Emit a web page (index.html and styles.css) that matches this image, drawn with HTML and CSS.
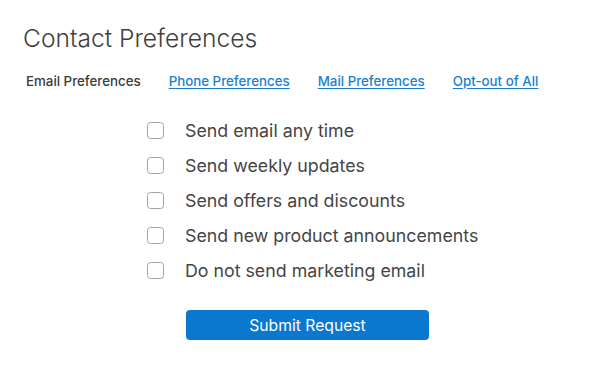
FILE: index.html
```html
<!DOCTYPE html>
<html lang="en">
<head>
<meta charset="utf-8">
<title>Contact Preferences</title>
<link rel="stylesheet" href="styles.css">
</head>
<body>
<div class="page">
  <h1 class="title">Contact Preferences</h1>
  <nav class="tabs">
    <span class="tab current">Email Preferences</span>
    <a class="tab link" href="#">Phone Preferences</a>
    <a class="tab link" href="#">Mail Preferences</a>
    <a class="tab link" href="#">Opt-out of All</a>
  </nav>
  <form class="form">
    <ul class="options">
      <li class="option"><span class="box"></span><span class="label">Send email any time</span></li>
      <li class="option"><span class="box"></span><span class="label">Send weekly updates</span></li>
      <li class="option"><span class="box"></span><span class="label">Send offers and discounts</span></li>
      <li class="option"><span class="box"></span><span class="label">Send new product announcements</span></li>
      <li class="option"><span class="box"></span><span class="label">Do not send marketing email</span></li>
    </ul>
    <button class="submit" type="button">Submit Request</button>
  </form>
</div>
</body>
</html>
```
FILE: styles.css
```css
html, body {
  margin: 0;
  padding: 0;
  background: #ffffff;
}
body {
  font-family: Inter, "Noto Sans", sans-serif;
  color: #444444;
}
.page {
  padding: 23px 0 0 23px;
}
.title {
  margin: 0;
  font-size: 24.6px;
  font-weight: 300;
  line-height: 30px;
  color: #3f3f3f;
}
.tabs {
  display: flex;
  gap: 28px;
  margin-top: 20px;
  padding-left: 3px;
  font-size: 13.3px;
  font-weight: 500;
  line-height: 16px;
}
.tab.current {
  color: #3a3a3a;
}
.tab.link {
  color: #1a7fd0;
  text-decoration: underline;
  text-underline-offset: 2px;
}
.form {
  padding-left: 124px;
  margin-top: 31px;
}
.options {
  list-style: none;
  margin: 0;
  padding: 0;
  display: flex;
  flex-direction: column;
  gap: 14px;
}
.option {
  display: flex;
  align-items: center;
  height: 21px;
}
.box {
  width: 15px;
  height: 15px;
  border: 1px solid #a4a4a4;
  border-radius: 3.5px;
  background: #fff;
  flex: none;
}
.label {
  margin-left: 21px;
  font-size: 17.8px;
  color: #454545;
}
.submit {
  display: block;
  margin: 29px 0 0 39px;
  width: 243px;
  height: 30px;
  border: none;
  border-radius: 4px;
  background: #0a78cf;
  color: #ffffff;
  font-family: Inter, "Noto Sans", sans-serif;
  font-size: 15.7px;
  padding: 0;
}
```
